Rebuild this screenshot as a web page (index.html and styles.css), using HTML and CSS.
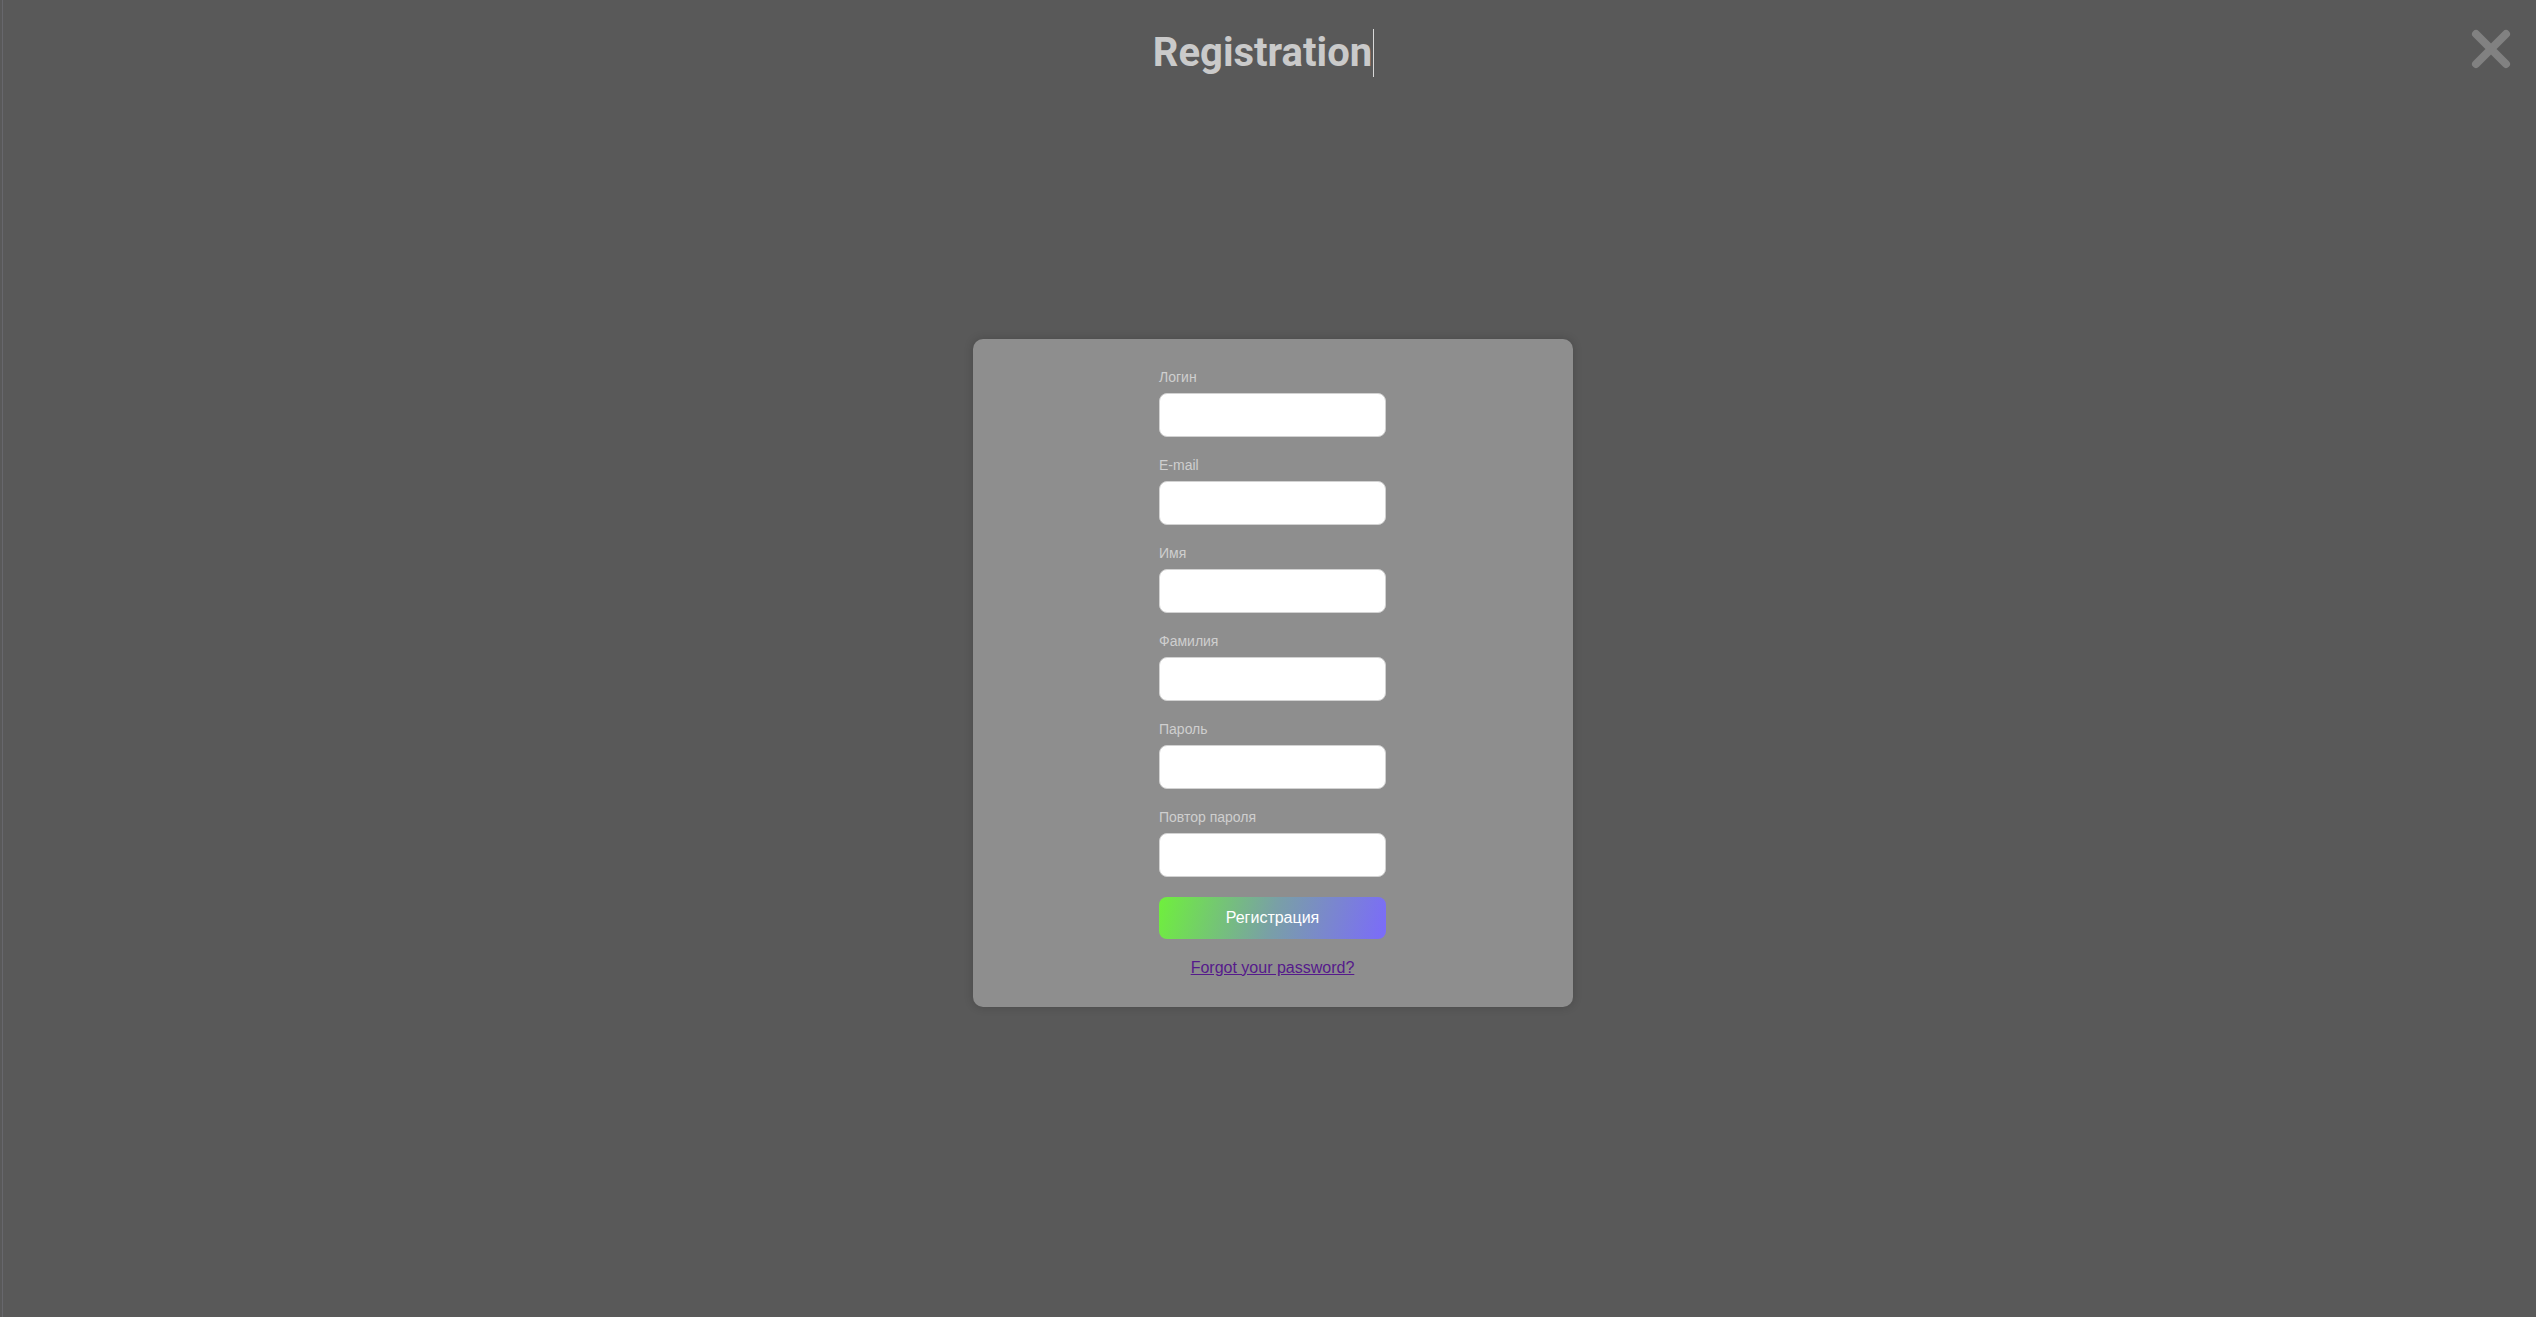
FILE: index.html
```html
<!DOCTYPE html>
<html lang="ru">
<head>
<meta charset="utf-8">
<title>Registration</title>
<link rel="stylesheet" href="styles.css">
</head>
<body>
<div class="page">
  <header class="top">
    <div class="spacer"></div>
    <h1 class="title"><span class="typed">Registration</span></h1>
    <div class="close-cell">
      <button class="close" aria-label="Закрыть">
        <svg width="40" height="40" viewBox="0 0 40 40"><path d="M5 5 L35 35 M35 5 L5 35" stroke="#818181" stroke-width="8" stroke-linecap="round" fill="none"/></svg>
      </button>
    </div>
  </header>
  <main class="card-wrap">
    <form class="card">
      <div class="col">
        <div class="field"><label class="label">Логин</label><input class="input" type="text"></div>
        <div class="field"><label class="label">E-mail</label><input class="input" type="email"></div>
        <div class="field"><label class="label">Имя</label><input class="input" type="text"></div>
        <div class="field"><label class="label">Фамилия</label><input class="input" type="text"></div>
        <div class="field"><label class="label">Пароль</label><input class="input" type="password"></div>
        <div class="field"><label class="label">Повтор пароля</label><input class="input" type="password"></div>
        <button class="submit" type="button">Регистрация</button>
        <a class="forgot" href="#">Forgot your password?</a>
      </div>
    </form>
  </main>
</div>
</body>
</html>
```
FILE: styles.css
```css
html, body {
  margin: 0;
  padding: 0;
  background: #595959;
  height: 100%;
}
body {
  font-family: "Liberation Sans", Arial, sans-serif;
}
.page {
  margin-left: 2px;
  border-left: 1px solid #67676c;
  min-height: 100%;
  box-sizing: border-box;
}
.top {
  display: grid;
  grid-template-columns: 1fr auto 1fr;
  align-items: start;
}
.title {
  margin: 0;
  padding-top: 29px;
  padding-right: 12px;
  font-family: Roboto, "Liberation Sans", sans-serif;
  font-weight: 700;
  font-size: 40px;
  line-height: 48px;
  color: #cacaca;
}
.typed {
  display: inline-block;
  padding-right: 1px;
  border-right: 1px solid #d8d8d8;
}
.close-cell {
  display: flex;
  justify-content: flex-end;
  padding-top: 29px;
  padding-right: 25px;
}
.close {
  display: block;
  width: 40px;
  height: 40px;
  padding: 0;
  border: 0;
  background: none;
  cursor: pointer;
}
.close svg { display: block; }
.card-wrap {
  display: flex;
  justify-content: center;
  padding-left: 6px;
  margin-top: 262px;
}
.card {
  width: 600px;
  box-sizing: border-box;
  padding: 30px 0 30px;
  background: #8e8e8e;
  border-radius: 10px;
  box-shadow: 0 0 10px rgba(0, 0, 0, 0.18);
  display: flex;
  justify-content: center;
}
.col {
  width: 227px;
  display: flex;
  flex-direction: column;
}
.field {
  display: flex;
  flex-direction: column;
  gap: 8px;
  margin-bottom: 20px;
}
.label {
  font-size: 14px;
  line-height: 16px;
  color: #cfcfcf;
}
.input {
  height: 44px;
  box-sizing: border-box;
  border: 1px solid #d2d2d2;
  border-radius: 8px;
  background: #fff;
  padding: 0 10px;
  font: inherit;
  outline: none;
}
.submit {
  height: 42px;
  border: 0;
  border-radius: 8px;
  background: linear-gradient(105deg, #6ff03c 0%, #79a0a6 50%, #7b6bfa 100%);
  color: #fff;
  font-family: "Liberation Sans", Arial, sans-serif;
  font-size: 16px;
  cursor: pointer;
}
.forgot {
  margin-top: 20px;
  text-align: center;
  font-size: 16px;
  line-height: 18px;
  color: #551a8b;
  text-decoration: underline;
}
```
